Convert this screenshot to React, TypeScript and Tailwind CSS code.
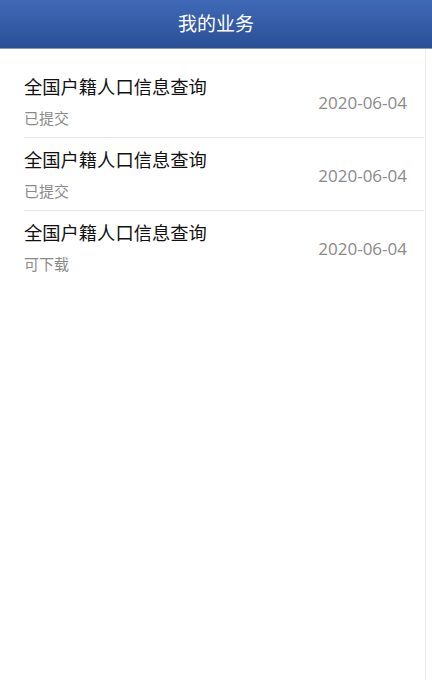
const items = [
  { name: "全国户籍人口信息查询", status: "已提交", date: "2020-06-04" },
  { name: "全国户籍人口信息查询", status: "已提交", date: "2020-06-04" },
  { name: "全国户籍人口信息查询", status: "可下载", date: "2020-06-04" },
];

export default function App() {
  return (
    <div
      className="w-[432px] h-[680px] bg-white flex flex-col"
      style={{ fontFamily: '"Open Sans", "Noto Sans CJK SC", sans-serif' }}
    >
      {/* 헤더 */}
      <header className="h-[49px] shrink-0 flex items-center justify-center bg-gradient-to-b from-[#4069b6] to-[#2a4f98] border-b border-[#8e96a6]">
        <h1 className="text-[19px] text-white leading-none">我的业务</h1>
      </header>

      <div className="flex-1 w-[426px] border-r border-[#ececec] pt-[16px]">
        <ul className="ml-[24px] mr-[1px]">
          {items.map((item, i) => (
            <li
              key={i}
              className={`h-[73px] flex items-center justify-between pr-[17px] ${
                i < items.length - 1 ? "border-b border-[#e6e6e6]" : ""
              }`}
            >
              <div className="flex flex-col">
                <span className="text-[18.3px] leading-[24px] text-[#111]">{item.name}</span>
                <span className="text-[15px] leading-[20px] text-[#8a8a8a] mt-[9px]">{item.status}</span>
              </div>
              <span className="text-[17px] text-[#8a8a8a] mt-[3px]">{item.date}</span>
            </li>
          ))}
        </ul>
      </div>
    </div>
  );
}
